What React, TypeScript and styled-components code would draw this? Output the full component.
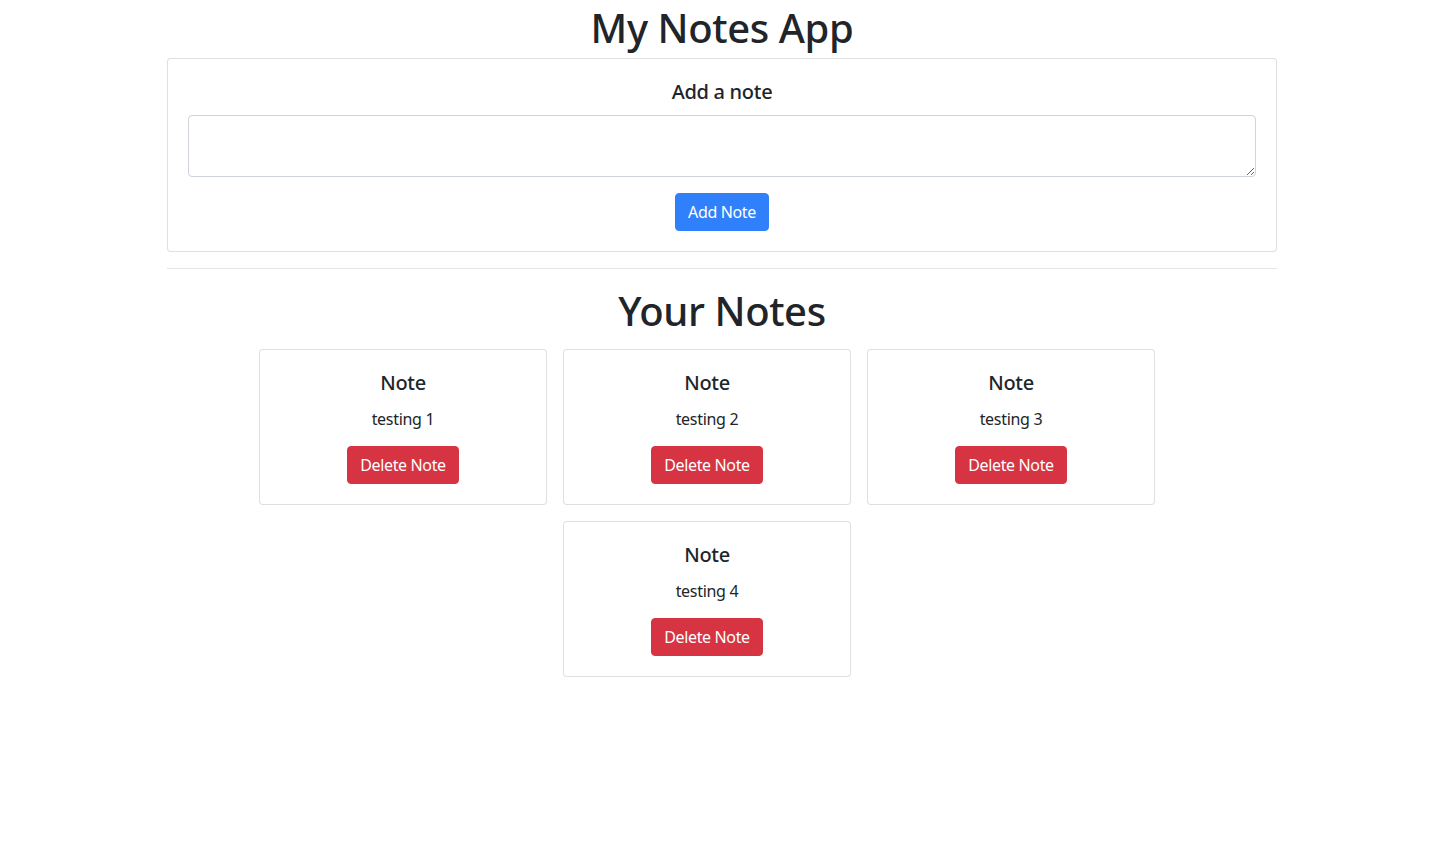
import React, { useState } from "react";
import styled, { createGlobalStyle } from "styled-components";

const GlobalStyle = createGlobalStyle`
  *, *::before, *::after { box-sizing: border-box; }
  body {
    margin: 0;
    font-family: "Segoe UI", "Noto Sans", "Open Sans", sans-serif;
    font-size: 16px;
    line-height: 1.5;
    letter-spacing: -0.3px;
    color: #212529;
    background: #fff;
  }
`;

const Container = styled.div`
  width: 1140px;
  margin: 0 auto;
  padding: 2px 14px 0 16px;
`;

const PageTitle = styled.h1`
  margin: 0 0 6px;
  padding-top: 2px;
  font-size: 40px;
  font-weight: 500;
  line-height: 1.2;
  letter-spacing: -0.4px;
  text-align: center;
`;

const Card = styled.div<{ $narrow?: boolean }>`
  border: 1px solid rgba(0, 0, 0, 0.125);
  border-radius: 4px;
  background: #fff;
  width: ${(p) => (p.$narrow ? "288px" : "auto")};
`;

const CardBody = styled.div`
  padding: 20px;
  text-align: center;
`;

const CardTitle = styled.h5`
  margin: 0 0 12px;
  padding-top: 2px;
  font-size: 20px;
  font-weight: 500;
  line-height: 1.2;
  height: 24px;
  display: flex;
  align-items: center;
  justify-content: center;
`;

const TextArea = styled.textarea`
  display: block;
  width: 100%;
  height: 62px;
  padding: 6px 12px;
  margin: 0 0 16px;
  font: inherit;
  color: #495057;
  border: 1px solid #ced4da;
  border-radius: 4px;
  resize: vertical;
  outline: none;
`;

const Button = styled.button<{ $variant: "primary" | "danger" }>`
  display: inline-block;
  padding: 6px 12px;
  font: inherit;
  font-size: 16px;
  line-height: 24px;
  letter-spacing: -0.35px;
  color: #fff;
  background: ${(p) => (p.$variant === "primary" ? "#3080fc" : "#d63343")};
  border: 1px solid ${(p) => (p.$variant === "primary" ? "#3080fc" : "#d63343")};
  border-radius: 4px;
  cursor: pointer;
`;

const Divider = styled.hr`
  margin: 16px 0;
  border: 0;
  border-top: 1px solid rgba(0, 0, 0, 0.1);
`;

const NotesGrid = styled.div`
  display: flex;
  flex-wrap: wrap;
  justify-content: center;
  gap: 16px;
  padding: 8px;
  margin-right: 30px;
`;

const NoteText = styled.p`
  margin: 0 0 16px;
  padding-top: 1px;
  height: 24px;
`;

export default function App() {
  const [text, setText] = useState("");
  const [notes, setNotes] = useState(["testing 1", "testing 2", "testing 3", "testing 4"]);

  return (
    <>
      <GlobalStyle />
      <Container>
        <PageTitle>My Notes App</PageTitle>
        <Card>
          <CardBody>
            <CardTitle>Add a note</CardTitle>
            <TextArea value={text} onChange={(e) => setText(e.target.value)} rows={2} />
            <Button
              $variant="primary"
              onClick={() => {
                if (text.trim()) {
                  setNotes([...notes, text.trim()]);
                  setText("");
                }
              }}
            >
              Add Note
            </Button>
          </CardBody>
        </Card>
        <Divider />
        <PageTitle>Your Notes</PageTitle>
        <NotesGrid>
          {notes.map((n, i) => (
            <Card $narrow key={i}>
              <CardBody>
                <CardTitle>Note</CardTitle>
                <NoteText>{n}</NoteText>
                <Button $variant="danger" onClick={() => setNotes(notes.filter((_, j) => j !== i))}>
                  Delete Note
                </Button>
              </CardBody>
            </Card>
          ))}
        </NotesGrid>
      </Container>
    </>
  );
}
